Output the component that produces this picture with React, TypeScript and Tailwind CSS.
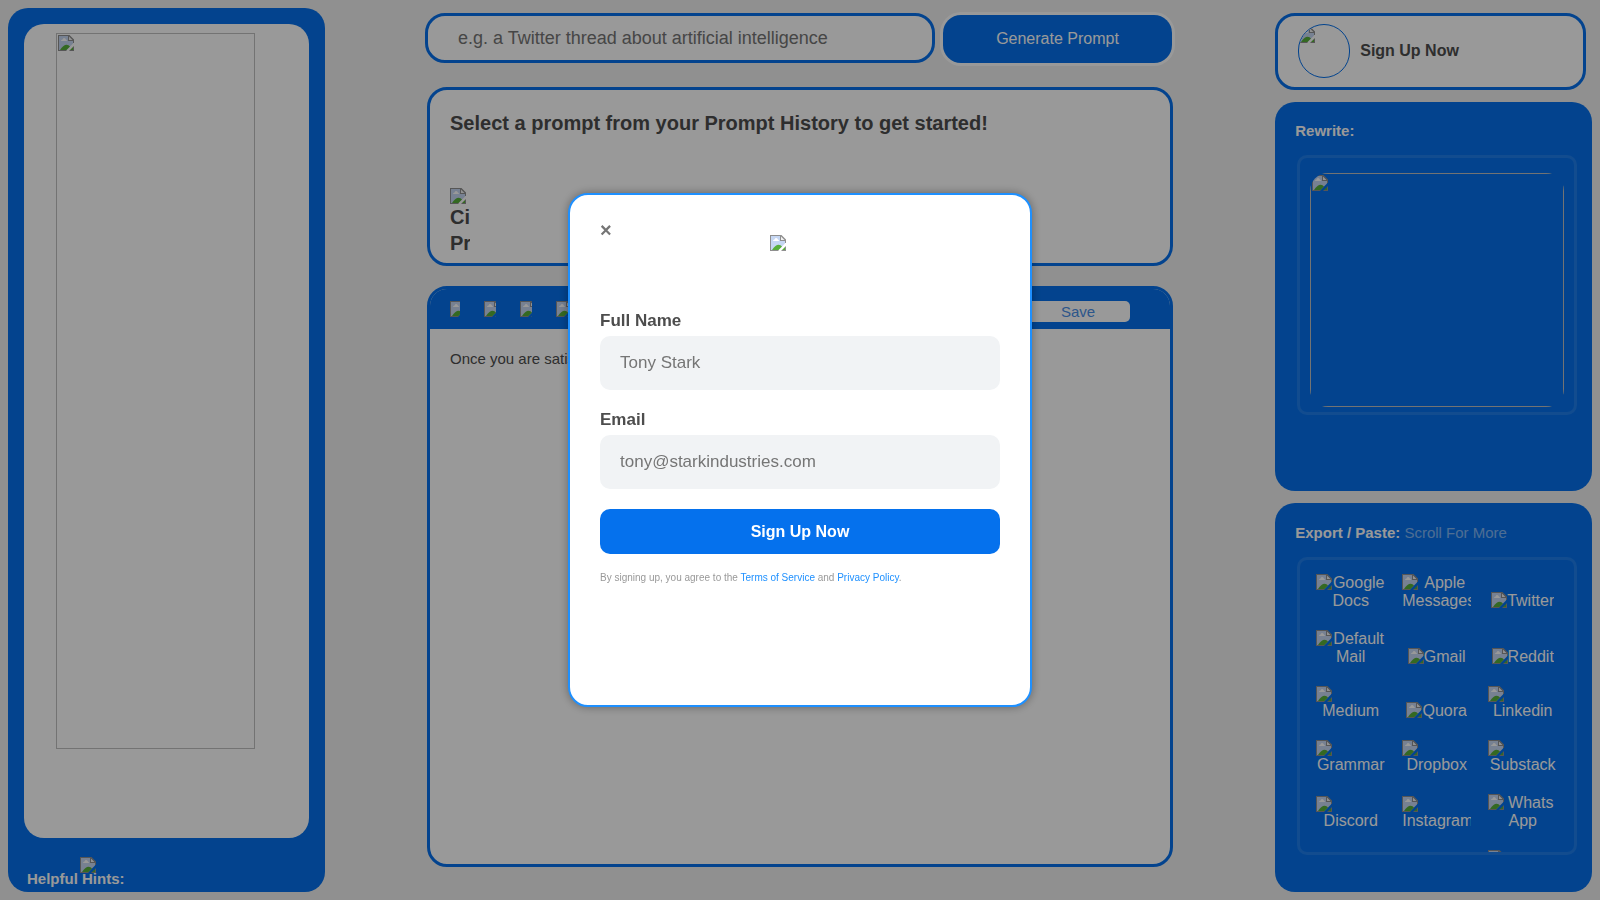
import { useId } from 'react'

const exportTargets = [
  'Google Docs',
  'Apple Messages',
  'Twitter',
  'Default Mail',
  'Gmail',
  'Reddit',
  'Medium',
  'Quora',
  'Linkedin',
  'Grammar',
  'Dropbox',
  'Substack',
  'Discord',
  'Instagram',
  'Whats App',
  'Slack',
  'Notion',
  'Facebook',
]

const tools = [
  { name: 'Copy', size: 'w-[10px]' },
  { name: 'Undo', size: 'w-3' },
  { name: 'Redo', size: 'w-3' },
  { name: 'Clear', size: 'w-4' },
]

export default function App() {
  return (
    <div className="min-h-screen bg-[#f0f0f0] font-['Liberation_Sans',Arial,sans-serif] text-[#4d4d4d]">
      <div className="flex h-screen min-h-[720px] p-2">
        <HistoryPanel />
        <main className="flex min-w-0 flex-1 justify-center px-4">
          <div className="flex w-full max-w-[750px] flex-col pt-[5px] pb-[25px]">
            <form className="flex items-end gap-2 pr-[3px]" onSubmit={(e) => e.preventDefault()}>
              <input
                type="text"
                aria-label="Prompt topic"
                placeholder="e.g. a Twitter thread about artificial intelligence"
                className="h-[50px] min-w-0 flex-1 rounded-[20px] border-3 border-[#0571ed] bg-white px-[30px] text-lg placeholder:text-[#757575]"
              />
              <button
                type="submit"
                className="h-12 w-[229px] rounded-[18px] bg-[#0571ed] text-base text-white ring-3 ring-white"
              >
                Generate Prompt
              </button>
            </form>

            <section className="mx-0.5 mt-6 h-[179px] rounded-[20px] border-3 border-[#0571ed] bg-white px-5 pt-5 text-xl leading-[26px] font-bold">
              <h1>Select a prompt from your Prompt History to get started!</h1>
              <div className="mt-[52px] w-5 overflow-hidden">
                <MissingImage />
                <p>Ci Pr</p>
              </div>
            </section>

            <section className="mx-0.5 mt-5 flex-1 overflow-hidden rounded-[20px] border-3 border-[#0571ed] bg-white">
              <div className="flex h-10 items-start bg-[#0571ed] pt-3 pr-10 pl-5">
                <div className="flex gap-6">
                  {tools.map((tool) => (
                    <button key={tool.name} type="button" aria-label={tool.name} className={classNames('h-4 overflow-hidden', tool.size)}>
                      <MissingImage />
                    </button>
                  ))}
                </div>
                <button type="button" className="ml-auto h-[21px] w-[104px] rounded-[5px] bg-white text-[15px] leading-[21px] text-[#4a90e8]">
                  Save
                </button>
              </div>
              <p className="px-5 pt-[21px] text-[15px] leading-[18px]">
                Once you are satisfied with your prompt, save it here.
              </p>
            </section>
          </div>
        </main>
        <Sidebar />
      </div>

      <div className="fixed inset-0 flex items-center justify-center bg-black/40">
        <SignUpModal />
      </div>
    </div>
  )
}

function HistoryPanel() {
  return (
    <aside className="flex w-1/5 flex-col rounded-[20px] bg-[#0571ed] px-4 pt-4">
      <div className="flex-1 rounded-[20px] bg-white pt-[9px] pl-8">
        <div className="h-[89%] w-[199px] max-w-full border border-[#c0c0c0] p-px">
          <MissingImage />
        </div>
      </div>
      <div className="relative h-[54px] pt-8 pl-[3px]">
        <div className="absolute top-[19px] left-14">
          <MissingImage />
        </div>
        <h2 className="relative text-[15px] leading-[18px] font-bold text-white">Helpful Hints:</h2>
      </div>
    </aside>
  )
}

function Sidebar() {
  return (
    <aside className="flex w-1/5 flex-col gap-3 pt-[5px]">
      <button
        type="button"
        className="mr-1.5 flex h-[77px] shrink-0 items-center gap-2.5 rounded-[20px] border-3 border-[#0571ed] bg-white pb-0.5 pl-5 text-base font-bold"
      >
        <span className="h-[54px] w-[52px] overflow-hidden rounded-full border border-[#0571ed] pt-0.5">
          <MissingImage />
        </span>
        Sign Up Now
      </button>

      <section className="min-h-0 flex-1 rounded-[20px] bg-[#0571ed] px-5 pt-5 text-white">
        <h2 className="text-[15px] leading-[18px] font-bold">Rewrite:</h2>
        <div className="mt-[15px] mr-[-5px] ml-0.5 h-[260px] rounded-[10px] border-3 border-white/10 px-2.5 pt-[15px]">
          <div className="h-[234px] overflow-hidden rounded-[18px]">
            <div className="h-full border border-[#c0c0c0] p-px">
              <MissingImage />
            </div>
          </div>
        </div>
      </section>

      <section className="min-h-0 flex-1 rounded-[20px] bg-[#0571ed] px-5 pt-[21px] text-white">
        <h2 className="text-[15px] leading-[18px] font-bold">
          Export / Paste: <span className="font-normal text-white/50">Scroll For More</span>
        </h2>
        <div className="mt-[15px] mr-[-5px] ml-0.5 h-[298px] overflow-hidden rounded-[10px] border-3 border-white/10 pt-3.5 pl-4">
          <ul className="grid grid-cols-[repeat(3,69px)] gap-x-[17px] gap-y-5">
            {exportTargets.map((target) => (
              <li key={target} className="flex items-end justify-center">
                <a href="#" className="block max-w-full overflow-hidden text-center text-base leading-[18px]">
                  <span className="float-left">
                    <MissingImage />
                  </span>
                  {target}
                </a>
              </li>
            ))}
          </ul>
        </div>
      </section>
    </aside>
  )
}

function SignUpModal() {
  return (
    <div
      role="dialog"
      aria-label="Sign up"
      className="h-[514px] w-[464px] rounded-[20px] border-2 border-[#1e90ff] bg-white px-[30px] pt-6 shadow-[0_0_10px_rgba(0,0,0,0.35)]"
    >
      <div className="flex h-[92px] items-start">
        <button type="button" aria-label="Close" className="w-[170px] text-left text-xl leading-[22px] font-bold text-[#757575]">
          ×
        </button>
        <div className="pt-4">
          <MissingImage />
        </div>
      </div>
      <form onSubmit={(e) => e.preventDefault()}>
        <Field label="Full Name" type="text" placeholder="Tony Stark" />
        <Field label="Email" type="email" placeholder="tony@starkindustries.com" />
        <button type="submit" className="h-[45px] w-full rounded-[10px] bg-[#0571ed] text-base font-bold text-white">
          Sign Up Now
        </button>
      </form>
      <p className="mt-[18px] text-[10px] leading-3 text-[#999]">
        By signing up, you agree to the{' '}
        <a href="#" className="text-[#1e90ff]">Terms of Service</a> and{' '}
        <a href="#" className="text-[#1e90ff]">Privacy Policy</a>.
      </p>
    </div>
  )
}

function Field({ label, type, placeholder }: { label: string; type: string; placeholder: string }) {
  const id = useId()

  return (
    <div className="mb-5">
      <label htmlFor={id} className="block pb-[5px] text-[17px] leading-5 font-bold">
        {label}
      </label>
      <input
        id={id}
        type={type}
        placeholder={placeholder}
        className="h-[54px] w-full rounded-[10px] bg-[#f1f3f5] px-5 text-[17px] placeholder:text-[#757575]"
      />
    </div>
  )
}

// Torn picture placeholder
function MissingImage() {
  return (
    <svg width="16" height="16" viewBox="0 0 16 16" className="block max-w-none" aria-hidden="true">
      <path d="M1 1h10v4h4v3.500L8.500 15H1z" fill="#c6d7f3" />
      <path d="M3 6q0-1.600 1.500-1.600Q5 3 6.200 3 7.600 3 7.900 4.500 9 4.600 9 6z" fill="#fff" />
      <path d="M2 15q1.500-2.500 3.500-4 2.500-2 5-.7l1.500 1.200L8.500 15z" fill="#58b03a" />
      <path d="M11 1l4 4h-4z" fill="#f2f2f2" />
      <path d="M0 0h11.500L16 4.500V8h-1V6h-5V1H1v14h8l-1 1H0zM11 1.500V5h3.500z" fill="#8f8f8f" fillRule="evenodd" />
      <path d="M16 11v5h-5l1-1h3v-3z" fill="#8f8f8f" />
      <path d="M15 12v3h-3z" fill="#58b03a" />
    </svg>
  )
}

function classNames(...classes: string[]) {
  return classes.filter(Boolean).join(' ')
}
